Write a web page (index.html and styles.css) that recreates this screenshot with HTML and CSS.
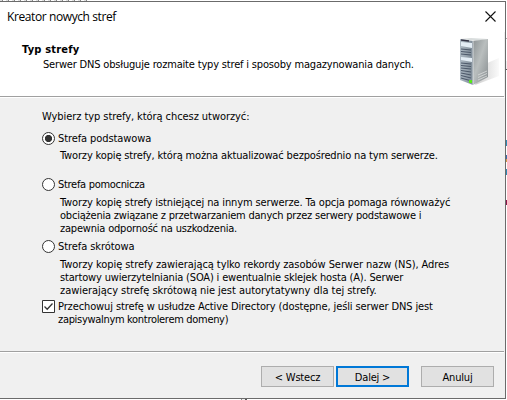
FILE: index.html
```html
<!DOCTYPE html>
<html lang="pl">
<head>
<meta charset="utf-8">
<title>Kreator nowych stref</title>
<link rel="stylesheet" href="styles.css">
</head>
<body>
<div class="backdrop-top"></div>
<main class="dialog">
  <div class="titlebar">
    <span class="caption">Kreator nowych stref</span>
    <svg class="close" width="11" height="11" viewBox="0 0 11 11"><path d="M.5.5l10 10M10.5.5l-10 10" stroke="#111" stroke-width="1.1" fill="none"/></svg>
  </div>
  <header class="header">
    <div class="heading">
      <h1>Typ strefy</h1>
      <p class="subtitle">Serwer DNS obsługuje rozmaite typy stref i sposoby magazynowania danych.</p>
    </div>
    <svg class="server" width="42" height="50" viewBox="0 0 42 50">
      <defs>
        <linearGradient id="side" x1="0" y1="0" x2="1" y2="1"><stop offset="0" stop-color="#8e9496"/><stop offset=".45" stop-color="#b9bebe"/><stop offset="1" stop-color="#858b8e"/></linearGradient>
        <linearGradient id="front" x1="0" y1="0" x2="1" y2="0"><stop offset="0" stop-color="#aebac4"/><stop offset="1" stop-color="#7c8995"/></linearGradient>
        <linearGradient id="shade" x1="0" y1="0" x2="1" y2="0"><stop offset="0" stop-color="#ccc"/><stop offset="1" stop-color="#fafafa"/></linearGradient>
      </defs>
      <path d="M26 27l14-6v18L16 48z" fill="url(#shade)"/>
      <path d="M1 2l11-1 17 1-12 2z" fill="#d9dddd"/>
      <path d="M14 4l15-2v38l-15 8z" fill="url(#side)"/>
      <path d="M1 2l13 2v44L1 43z" fill="url(#front)"/>
      <path d="M2 5l11 1v5L2 9zM2 20l11 1v4L2 23z" fill="#e3edf5"/>
      <path d="M2 3l8 1" stroke="#334" stroke-width="1.4"/>
      <path d="M2 12l10 1M2 14.500l10 1M2 17l10 1M2 26l10 1M2 28.500l10 1M2 31l10 1M2 33.500l10 1.500M2 36l10 2M2 38.500l10 2.500M2 41l9 2.500" stroke="#4d596a" stroke-width="1.1"/>
      <path d="M14 4v44" stroke="#e4e9ec" stroke-width=".8"/>
      <path d="M19 38l9-4M19 40.500l9-4M19 43l9-4" stroke="#dadddd" stroke-width=".8"/>
      <path d="M10 43h3v3h-3z" fill="#55eb16"/>
    </svg>
  </header>
  <section class="content">
    <p class="intro">Wybierz typ strefy, którą chcesz utworzyć:</p>
    <label class="option primary"><span class="radio checked"></span><span>Strefa podstawowa</span></label>
    <div class="description"><p class="d1">Tworzy kopię strefy, którą można aktualizować bezpośrednio na tym serwerze.</p></div>
    <label class="option secondary"><span class="radio"></span><span>Strefa pomocnicza</span></label>
    <div class="description">
      <p class="d2">Tworzy kopię strefy istniejącej na innym serwerze. Ta opcja pomaga równoważyć</p>
      <p class="d3">obciążenia związane z przetwarzaniem danych przez serwery podstawowe i</p>
      <p class="d4">zapewnia odporność na uszkodzenia.</p>
    </div>
    <label class="option stub"><span class="radio"></span><span>Strefa skrótowa</span></label>
    <div class="description stub-description">
      <p class="d5">Tworzy kopię strefy zawierającą tylko rekordy zasobów Serwer nazw (NS), Adres</p>
      <p class="d6">startowy uwierzytelniania (SOA) i ewentualnie sklejek hosta (A). Serwer</p>
      <p class="d7">zawierający strefę skrótową nie jest autorytatywny dla tej strefy.</p>
    </div>
    <label class="option storage">
      <svg class="checkbox" width="13" height="13" viewBox="0 0 13 13"><path d="M.5.5h12v12H.5z" fill="#fff" stroke="#333"/><path d="M2.500 6.500l2.700 2.700 5.300-5.700" fill="none" stroke="#333" stroke-width="1.3"/></svg>
      <span><span class="line d8">Przechowuj strefę w usłudze Active Directory (dostępne, jeśli serwer DNS jest</span><span class="line d9">zapisywalnym kontrolerem domeny)</span></span>
    </label>
  </section>
  <footer class="footer">
    <button>&lt; Wstecz</button><button class="default">Dalej &gt;</button><button class="cancel">Anuluj</button>
  </footer>
</main>
<div class="backdrop-right"></div>
<div class="backdrop-bottom"></div>
</body>
</html>
```

FILE: styles.css
```css
* { box-sizing: border-box; }
body {
  position: relative;
  width: 507px;
  height: 400px;
  margin: 0;
  overflow: hidden;
  background: #fff;
  color: #000;
  font: 11px/13px "DejaVu Sans Condensed", "DejaVu Sans", sans-serif;
  font-stretch: condensed;
}
p, h1 { margin: 0; white-space: nowrap; }
.dialog {
  position: relative;
  display: grid;
  grid-template-rows: 30px 65px 254px 47px;
  width: 506px;
  height: 398px;
  margin-top: 1px;
  border: solid #6b6b6b;
  border-width: 1px 1px 1px 0;
  background: #f0f0f0;
}
.titlebar {
  display: flex;
  justify-content: space-between;
  padding: 8px 9px 0 7px;
  background: #fff;
}
.caption { font: 12px/14px "Open Sans", sans-serif; letter-spacing: -.4px; }
.close { margin: 1px 0 0; }
.header {
  display: flex;
  justify-content: space-between;
  padding: 5px 3px 0 22px;
  margin-right: 1px;
  border-bottom: 1px solid #a0a0a0;
  background: #fff;
}
.heading { padding-top: 6px; }
h1 { font-size: 11px; font-weight: bold; line-height: 14px; letter-spacing: .2px; }
.subtitle { margin: 1px 0 0 21px; letter-spacing: -.178px; }
.content { padding: 12px 0 0 42px; border-top: 1px solid #fff; }
.intro { letter-spacing: -.07px; }
.option { display: flex; gap: 3px; line-height: 13px; white-space: nowrap; }
.radio {
  flex: none;
  width: 13px;
  height: 13px;
  border: 1px solid #333;
  border-radius: 50%;
  background: #fff;
}
.radio.checked { background: radial-gradient(circle, #333 3.300px, #fff 3.900px); }
.primary { margin-top: 9px; letter-spacing: -.1px; }
.description { margin: 4px 0 0 18px; }
.secondary { margin-top: 16px; letter-spacing: -.3px; }
.secondary + .description { margin-top: 5px; }
.stub { margin-top: 5px; letter-spacing: -.07px; }
.stub-description { margin-top: 5px; }
.storage { margin-top: 3px; }
.d1 { letter-spacing: -.15px; }
.d2 { letter-spacing: -.11px; }
.d3 { letter-spacing: -.21px; }
.d4 { letter-spacing: -.2px; }
.d5 { letter-spacing: -.077px; }
.d6 { letter-spacing: -.17px; }
.d7 { letter-spacing: -.044px; }
.d8 { letter-spacing: -.115px; }
.d9 { letter-spacing: -.31px; }
.checkbox { flex: none; }
.line { display: block; }
.footer {
  display: flex;
  padding: 14px 0 0 261px;
  margin-right: 1px;
  border-top: 1px solid #a0a0a0;
  box-shadow: inset 0 1px #fff;
}
button {
  width: 73px;
  height: 21px;
  padding: 1px 0 0;
  border: 1px solid #adadad;
  background: #e1e1e1;
  color: #000;
  font: inherit;
  letter-spacing: -.2px;
}
.default { margin-left: 2px; border: 2px solid #0078d7; }
.cancel { margin-left: 12px; }
.backdrop-top, .backdrop-right, .backdrop-bottom { position: absolute; }
.backdrop-top {
  top: 0;
  left: 0;
  width: 90px;
  height: 1px;
  background: repeating-linear-gradient(90deg, #ddd 0 2px, #888 2px 3px, #fff 3px 6px);
}
.backdrop-right {
  top: 0;
  left: 506px;
  width: 1px;
  height: 400px;
  background: linear-gradient(#fff 38px, #aaa 38px 39px, #fff 39px 61px, #f0f0f0 61px 69px, #555 69px 70px, #fff 70px 140px, #2e8ab5 140px 146px, #fff 146px 155px, #3a6da8 155px 159px, #d39a48 159px 162px, #fff 162px 169px, #2e8ab5 169px 175px, #fff 175px 200px, #8b164b 200px 205px, #fff 205px);
}
.backdrop-bottom {
  top: 399px;
  left: 241px;
  width: 6px;
  height: 1px;
  background: linear-gradient(90deg, #888 1px, #eee 1px 4px, #555 4px);
}
```
